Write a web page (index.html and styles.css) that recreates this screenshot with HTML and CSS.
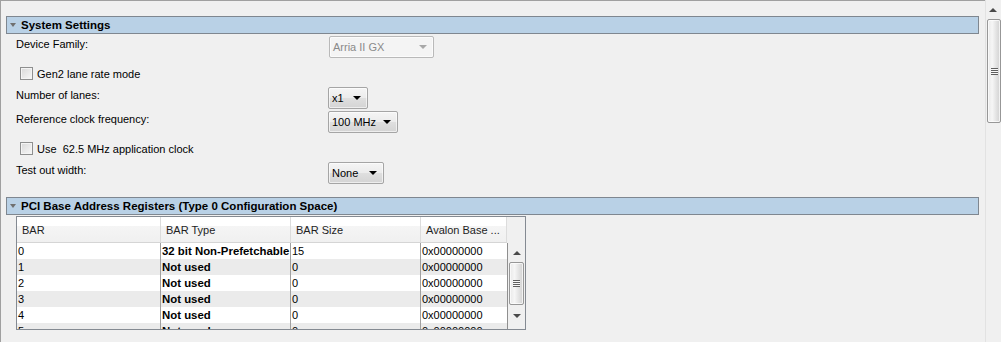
FILE: index.html
```html
<!DOCTYPE html>
<html lang="en">
<head>
    <meta charset="UTF-8">
    <title>Parameter Settings</title>
    <link rel="stylesheet" href="styles.css">
</head>
<body>
    <div class="window">
        <div class="panel">
            <div class="section-head"><span class="caret"></span>System Settings</div>
            <div class="section-body">
                <div class="field first">
                    <label>Device Family:</label>
                    <div class="combo disabled w-family"><span class="combo-text">Arria II GX</span><span class="arrow"></span></div>
                </div>
                <div class="check-row">
                    <span class="checkbox"></span><span>Gen2 lane rate mode</span>
                </div>
                <div class="field gap7">
                    <label>Number of lanes:</label>
                    <div class="combo w-lanes"><span class="combo-text">x1</span><span class="arrow"></span></div>
                </div>
                <div class="field">
                    <label>Reference clock frequency:</label>
                    <div class="combo w-clock"><span class="combo-text">100 MHz</span><span class="arrow"></span></div>
                </div>
                <div class="check-row">
                    <span class="checkbox"></span><span>Use &nbsp;62.5 MHz application clock</span>
                </div>
                <div class="field gap7">
                    <label>Test out width:</label>
                    <div class="combo w-test"><span class="combo-text">None</span><span class="arrow"></span></div>
                </div>
            </div>

            <div class="section-head second"><span class="caret"></span>PCI Base Address Registers (Type 0 Configuration Space)</div>
            <div class="section-body">
                <div class="table">
                    <div class="thead">
                        <div class="th">BAR</div>
                        <div class="th">BAR Type</div>
                        <div class="th">BAR Size</div>
                        <div class="th">Avalon Base ...</div>
                        <div class="th-fill"></div>
                    </div>
                    <div class="tbody">
                        <div class="rows">
                            <div class="tr"><span>0</span><span class="b">32 bit Non-Prefetchable</span><span>15</span><span>0x00000000</span></div>
                            <div class="tr"><span>1</span><span class="b">Not used</span><span>0</span><span>0x00000000</span></div>
                            <div class="tr"><span>2</span><span class="b">Not used</span><span>0</span><span>0x00000000</span></div>
                            <div class="tr"><span>3</span><span class="b">Not used</span><span>0</span><span>0x00000000</span></div>
                            <div class="tr"><span>4</span><span class="b">Not used</span><span>0</span><span>0x00000000</span></div>
                            <div class="tr"><span>5</span><span class="b">Not used</span><span>0</span><span>0x00000000</span></div>
                        </div>
                        <div class="tscroll">
                            <div class="sb-btn up"><span class="sb-arrow up"></span></div>
                            <div class="thumb small"><span class="grip"></span></div>
                            <div class="sb-track"></div>
                            <div class="sb-btn down"><span class="sb-arrow down"></span></div>
                        </div>
                    </div>
                </div>
            </div>
        </div>
        <div class="vscroll">
            <div class="sb-btn main-up"><span class="sb-arrow up"></span></div>
            <div class="thumb big"><span class="grip"></span></div>
        </div>
    </div>
</body>
</html>
```

FILE: styles.css
```css
body {
    margin: 0;
    background: #f0f0f0;
    font-family: "Liberation Sans", Arial, sans-serif;
    font-size: 11px;
    color: #000000;
}

.window {
    display: flex;
    height: 342px;
    border-left: 1px solid #a0a0a0;
    overflow: hidden;
}

.panel {
    flex: 1;
    border-top: 1px solid #a0a0a0;
    padding: 15px 6px 0 5px;
    overflow: hidden;
}

/* section header bars */
.section-head {
    display: flex;
    align-items: center;
    height: 18px;
    box-sizing: border-box;
    border: 1px solid #7f8790;
    background: #b9d1e6;
    padding-left: 2px;
    font-weight: bold;
    font-size: 11.5px;
    line-height: 16px;
}

.section-head.second {
    margin-top: 13px;
}

.caret {
    width: 0;
    height: 0;
    border-left: 3px solid transparent;
    border-right: 3px solid transparent;
    border-top: 4px solid #707070;
    margin: 0 5px 0 1px;
}

.section-body {
    padding-left: 10px;
}

/* form rows */
.field {
    display: grid;
    grid-template-columns: 312px auto;
    margin-top: 2px;
}

.field.gap7 {
    margin-top: 7px;
}

.field label {
    padding-top: 1px;
    line-height: 14px;
}

.check-row {
    display: flex;
    align-items: center;
    height: 13px;
    margin-top: 9px;
    padding-left: 4px;
    line-height: 12px;
}

.checkbox {
    width: 13px;
    height: 13px;
    box-sizing: border-box;
    border: 1px solid #8e8f8f;
    background: linear-gradient(135deg, #d8d8d8, #f8f8f8);
    box-shadow: inset 0 0 0 1px #f4f4f4;
    margin-right: 4px;
}

/* combo boxes */
.combo {
    display: flex;
    align-items: center;
    height: 22px;
    box-sizing: border-box;
    border: 1px solid #a5a5a5;
    border-radius: 2px;
    background: linear-gradient(#f5f5f5, #ececec 48%, #dfdfdf 52%, #d4d4d4);
    box-shadow: inset 0 0 0 1px rgba(255, 255, 255, 0.6);
}

.combo-text {
    flex: 1;
    padding-left: 3px;
    white-space: nowrap;
}

.arrow {
    width: 0;
    height: 0;
    border-left: 4px solid transparent;
    border-right: 4px solid transparent;
    border-top: 4px solid #000000;
    margin-right: 6px;
}

.combo.disabled {
    border-color: #b9b9b9;
    background: #f4f4f4;
    box-shadow: inset 0 0 0 1px #fbfbfb;
    color: #8a8a8a;
}

.combo.disabled .arrow {
    border-top-color: #a8a8a8;
}

.w-family {
    width: 105px;
    margin-left: 1px;
}

.w-lanes {
    width: 40px;
}

.w-clock {
    width: 70px;
}

.w-test {
    width: 56px;
}

/* table */
.table {
    width: 510px;
    height: 114px;
    box-sizing: border-box;
    border: 1px solid #848a92;
    margin-top: 1px;
    display: flex;
    flex-direction: column;
    background: #ffffff;
}

.thead {
    display: flex;
    height: 26px;
    flex-shrink: 0;
}

.th {
    box-sizing: border-box;
    height: 26px;
    border-right: 1px solid #dcdcdc;
    border-bottom: 1px solid #d5d5d5;
    background: linear-gradient(#ffffff, #ffffff 35%, #f5f5f5 36%, #f0f0f0);
    padding-left: 5px;
    line-height: 27px;
    color: #1e1e1e;
    white-space: nowrap;
}

.th:nth-child(1) {
    width: 144px;
}

.th:nth-child(2) {
    width: 130px;
}

.th:nth-child(3) {
    width: 130px;
}

.th:nth-child(4) {
    width: 86px;
}

.th-fill {
    flex: 1;
    background: #f0f0f0;
}

.tbody {
    display: flex;
    flex: 1;
    overflow: hidden;
}

.rows {
    flex: 1;
    overflow: hidden;
}

.tr {
    display: grid;
    grid-template-columns: 144px 130px 130px 86px;
    height: 16px;
    line-height: 16px;
}

.tr:nth-child(even) {
    background: #ebebeb;
}

.tr span {
    padding-left: 1px;
    white-space: nowrap;
    overflow: hidden;
}

.tr span:not(:last-child) {
    border-right: 1px solid #a0a0a0;
}

.tr .b {
    font-weight: bold;
    font-size: 11.4px;
}

/* scrollbars */
.tscroll {
    width: 17px;
    border-left: 1px solid #8f8f8f;
    background: #f0f0f0;
    display: flex;
    flex-direction: column;
    align-items: center;
}

.sb-btn {
    display: flex;
    align-items: center;
    justify-content: center;
    width: 100%;
}

.sb-btn.up {
    height: 19px;
}

.sb-btn.down {
    height: 15px;
    align-items: flex-start;
    padding-top: 2px;
}

.sb-track {
    flex: 1;
}

.sb-arrow {
    width: 0;
    height: 0;
    border-left: 4px solid transparent;
    border-right: 4px solid transparent;
}

.sb-arrow.up {
    border-bottom: 4px solid #4a4a4a;
}

.sb-arrow.down {
    border-top: 4px solid #4a4a4a;
}

.thumb {
    box-sizing: border-box;
    border: 1px solid #979797;
    border-radius: 2px;
    background: linear-gradient(to right, #e9e9e9, #f6f6f6 35%, #e2e2e2 70%, #d2d2d2);
    box-shadow: inset 0 0 0 1px rgba(255, 255, 255, 0.7);
    display: flex;
    align-items: center;
    justify-content: center;
}

.thumb.small {
    width: 15px;
    height: 43px;
}

.grip {
    width: 7px;
    height: 7px;
    background: repeating-linear-gradient(#5f5f5f 0, #5f5f5f 1px, #f8f8f8 1px, #f8f8f8 2px);
}

.vscroll {
    width: 15px;
    border-left: 1px solid #e2e2e2;
    background: #f0f0f0;
    display: flex;
    flex-direction: column;
    align-items: flex-end;
}

.sb-btn.main-up {
    height: 19px;
    padding-right: 1px;
    box-sizing: border-box;
}

.thumb.big {
    width: 14px;
    height: 104px;
}
```
